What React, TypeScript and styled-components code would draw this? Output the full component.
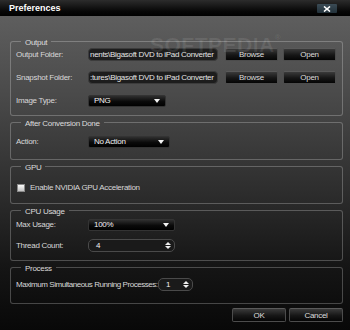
import React from 'react';
import styled, { createGlobalStyle } from 'styled-components';

const GlobalStyle = createGlobalStyle`
  html, body {
    margin: 0;
    padding: 0;
    background: #000;
  }
  body {
    font-family: "Liberation Sans", Arial, sans-serif;
    font-size: 8px;
    letter-spacing: -0.3px;
    color: #d8d8d8;
  }
`;

const Window = styled.div`
  position: relative;
  width: 350px;
  height: 330px;
  display: flex;
  flex-direction: column;
  overflow: hidden;
`;

const TitleBar = styled.div`
  height: 16px;
  flex: none;
  display: flex;
  align-items: center;
  justify-content: space-between;
  padding: 0 13px 0 9px;
  background: linear-gradient(#2c2c2c, #070707 70%, #000);
`;

const Title = styled.span`
  font-weight: bold;
  font-size: 9px;
  color: #fff;
  letter-spacing: 0;
`;

const CloseButton = styled.div`
  width: 20px;
  height: 9px;
  margin-top: 1px;
  border-radius: 1px;
  background: linear-gradient(#3b4b55, #22313a);
  display: flex;
  align-items: center;
  justify-content: center;
`;

const Body = styled.div`
  flex: 1;
  display: flex;
  flex-direction: column;
  gap: 6px;
  padding: 25px 7px 0 10px;
  background: linear-gradient(#5e5e5e 0%, #4a4a4a 25%, #2e2e2e 55%, #151515 80%, #080808 100%);
`;

const Watermark = styled.div`
  position: absolute;
  left: 150px;
  top: 33px;
  font-family: "Liberation Sans", Arial, sans-serif;
  font-weight: bold;
  font-size: 21px;
  letter-spacing: 0.5px;
  color: rgba(255, 255, 255, 0.09);
  pointer-events: none;
  sup {
    font-size: 8px;
    vertical-align: 12px;
  }
`;

const line = 'rgba(255, 255, 255, 0.24)';

const Group = styled.div`
  display: flex;
  flex-direction: column;
`;

const GroupHead = styled.div`
  display: flex;
  height: 7px;
`;

const CapLeft = styled.div`
  width: 10px;
  border-top: 1px solid ${line};
  border-left: 1px solid ${line};
  border-top-left-radius: 3px;
`;

const CapFill = styled.div`
  flex: 1;
  border-top: 1px solid ${line};
  border-right: 1px solid ${line};
  border-top-right-radius: 3px;
`;

const Legend = styled.span`
  padding: 0 4px;
  line-height: 10px;
  margin-top: -3px;
  height: 10px;
  color: #dcdcdc;
`;

const GroupBody = styled.div<{ $pt: number; $pb: number; $gap?: number }>`
  display: flex;
  flex-direction: column;
  gap: ${(p) => p.$gap ?? 0}px;
  padding: ${(p) => p.$pt}px 5px ${(p) => p.$pb}px 5px;
  border: 1px solid ${line};
  border-top: none;
  border-radius: 0 0 3px 3px;
`;

const Row = styled.div`
  display: flex;
  align-items: center;
  height: 13px;
`;

const Label = styled.span<{ $w?: number; $tight?: boolean }>`
  width: ${(p) => (p.$w ? `${p.$w}px` : 'auto')};
  flex: none;
  white-space: nowrap;
  letter-spacing: ${(p) => (p.$tight ? '-0.45px' : 'inherit')};
`;

const PathInput = styled.div`
  width: 130px;
  height: 13px;
  box-sizing: border-box;
  margin-right: 7px;
  padding-left: 1px;
  border: 1px solid #3c3c3c;
  border-radius: 4px;
  background: #1d1d1d;
  color: #e4e4e4;
  line-height: 11px;
  white-space: nowrap;
  overflow: hidden;
`;

const Button = styled.div<{ $w?: number }>`
  width: ${(p) => p.$w ?? 53}px;
  height: 13px;
  box-sizing: border-box;
  border: 1px solid #4c4c4c;
  border-top-color: #5a5a5a;
  border-radius: 2px;
  background: linear-gradient(#3a3a3a, #161616 55%, #050505);
  color: #dcdcdc;
  display: flex;
  align-items: center;
  justify-content: center;
  & + & {
    margin-left: 5px;
  }
`;

const Combo = styled.div<{ $w: number }>`
  width: ${(p) => p.$w}px;
  height: 12px;
  box-sizing: border-box;
  padding: 0 5px;
  border: 1px solid #333;
  border-radius: 2px;
  background: linear-gradient(#2e2e2e, #0a0a0a 55%, #000);
  color: #f0f0f0;
  display: flex;
  align-items: center;
  justify-content: space-between;
`;

const Arrow = styled.span`
  width: 0;
  height: 0;
  border-left: 3.5px solid transparent;
  border-right: 3.5px solid transparent;
  border-top: 4px solid #f4f4f4;
`;

const Spin = styled.div<{ $w: number }>`
  width: ${(p) => p.$w}px;
  height: 13px;
  box-sizing: border-box;
  padding: 0 3px 0 7px;
  border: 1px solid #4a4a4a;
  border-radius: 5px;
  background: #1a1a1a;
  color: #f0f0f0;
  display: flex;
  align-items: center;
  justify-content: space-between;
`;

const SpinArrows = styled.span`
  display: flex;
  flex-direction: column;
  gap: 1px;
`;

const Tri = styled.span<{ $up?: boolean }>`
  width: 0;
  height: 0;
  border-left: 3px solid transparent;
  border-right: 3px solid transparent;
  ${(p) => (p.$up ? 'border-bottom: 3px solid #eee;' : 'border-top: 3px solid #eee;')}
`;

const CheckBox = styled.span`
  width: 8px;
  height: 8px;
  box-sizing: border-box;
  margin: 0 5px 0 1px;
  border: 1px solid #8a8a8a;
  background: linear-gradient(#fafafa, #c4c4c4);
`;

const Footer = styled.div`
  display: flex;
  justify-content: flex-end;
  margin-top: -2px;
`;

const FooterButton = styled(Button)`
  height: 14px;
  & + & {
    margin-left: 3px;
  }
`;

function GroupBox({
  title,
  pt,
  pb,
  gap,
  children,
}: {
  title: string;
  pt: number;
  pb: number;
  gap?: number;
  children: React.ReactNode;
}) {
  return (
    <Group>
      <GroupHead>
        <CapLeft />
        <Legend>{title}</Legend>
        <CapFill />
      </GroupHead>
      <GroupBody $pt={pt} $pb={pb} $gap={gap}>
        {children}
      </GroupBody>
    </Group>
  );
}

function Spinner({ value, w }: { value: string; w: number }) {
  return (
    <Spin $w={w}>
      <span>{value}</span>
      <SpinArrows>
        <Tri $up />
        <Tri />
      </SpinArrows>
    </Spin>
  );
}

export default function App() {
  return (
    <>
      <GlobalStyle />
      <Window>
        <TitleBar>
          <Title>Preferences</Title>
          <CloseButton>
            <svg width="8" height="6" viewBox="0 0 8 6">
              <path d="M1 0.5 L7 5.5 M7 0.5 L1 5.5" stroke="#fff" strokeWidth="1.6" />
            </svg>
          </CloseButton>
        </TitleBar>
        <Body>
          <GroupBox title="Output" pt={0} pb={8} gap={10}>
            <Row>
              <Label $w={72}>Output Folder:</Label>
              <PathInput>nents\Bigasoft DVD to iPad Converter</PathInput>
              <Button>Browse</Button>
              <Button>Open</Button>
            </Row>
            <Row>
              <Label $w={72}>Snapshot Folder:</Label>
              <PathInput>:tures\Bigasoft DVD to iPad Converter</PathInput>
              <Button>Browse</Button>
              <Button>Open</Button>
            </Row>
            <Row>
              <Label $w={72}>Image Type:</Label>
              <Combo $w={78}>
                <span>PNG</span>
                <Arrow />
              </Combo>
            </Row>
          </GroupBox>

          <GroupBox title="After Conversion Done" pt={6} pb={11}>
            <Row>
              <Label $w={72}>Action:</Label>
              <Combo $w={82}>
                <span>No Action</span>
                <Arrow />
              </Combo>
            </Row>
          </GroupBox>

          <GroupBox title="GPU" pt={8} pb={9}>
            <Row>
              <CheckBox />
              <Label>Enable NVIDIA GPU Acceleration</Label>
            </Row>
          </GroupBox>

          <GroupBox title="CPU Usage" pt={1} pb={8} gap={8}>
            <Row>
              <Label $w={72}>Max Usage:</Label>
              <Combo $w={87}>
                <span>100%</span>
                <Arrow />
              </Combo>
            </Row>
            <Row>
              <Label $w={72}>Thread Count:</Label>
              <Spinner value="4" w={87} />
            </Row>
          </GroupBox>

          <GroupBox title="Process" pt={4} pb={12}>
            <Row>
              <Label $w={142} $tight>
                Maximum Simultaneous Running Processes:
              </Label>
              <Spinner value="1" w={35} />
            </Row>
          </GroupBox>

          <Footer>
            <FooterButton $w={54}>OK</FooterButton>
            <FooterButton $w={54}>Cancel</FooterButton>
          </Footer>
        </Body>
        <Watermark>
          SOFTPEDIA<sup>®</sup>
        </Watermark>
      </Window>
    </>
  );
}
